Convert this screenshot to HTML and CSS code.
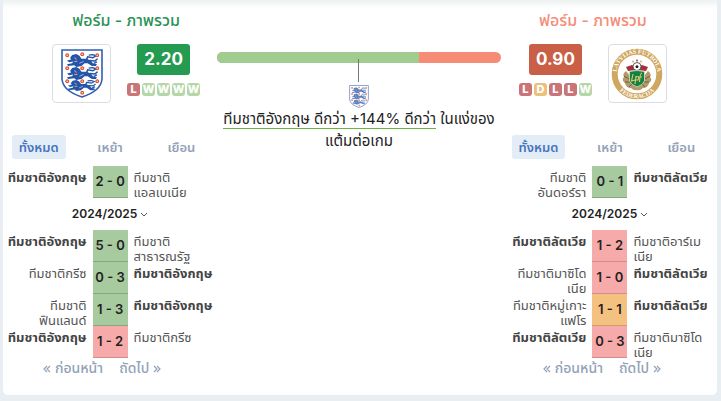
FILE: index.html
```html
<!DOCTYPE html>
<html lang="th">
<head>
    <meta charset="UTF-8">
    <meta name="viewport" content="width=device-width, initial-scale=1.0">
    <title>ฟอร์ม - ภาพรวม</title>
    <link rel="stylesheet" href="styles.css">
</head>
<body>
    <svg class="sprite" aria-hidden="true">
        <symbol id="lion" viewBox="0 0 30 14" preserveAspectRatio="none">
            <path d="M3 4 L5 1 L9 0 L12 2 L14 5 L19 5 L23 7 L25 10 L29 11 L28 13 L24 13 L20 10 L17 10 L14 13 L9 14 L7 12 L1 13 L0 11 L5 10 L6 8 L2 9 L0 7 L4 6 Z" fill="#2455a8"/>
            <path d="M19 6 L20 3 L25 4 L28 2 L25 0.700 L21 1.200 M22 7 L27 7.500 L29.500 5 M26 10 L29 8.500" fill="none" stroke="#2455a8" stroke-width="1.5"/>
            <path d="M7 4 L9 5 M7 8 L10 8 M12 10 L16 8" stroke="#d8e3f5" stroke-width="0.7"/>
            <circle cx="9" cy="6" r="1" fill="#e0503c"/>
        </symbol>
        <symbol id="rose" viewBox="0 0 6 6">
            <circle cx="3" cy="3" r="2.6" fill="#e0503c"/>
            <circle cx="3" cy="3" r="1.1" fill="#fbe3a0"/>
        </symbol>
        <symbol id="england" viewBox="0 0 42 49">
            <path d="M1 1 H41 V30 Q40 42 21 48 Q2 42 1 30 Z" fill="#fff" stroke="#2e5fb3" stroke-width="1.6"/>
            <use href="#lion" x="6" y="5" width="31" height="13"/>
            <use href="#lion" x="6" y="18" width="31" height="13"/>
            <use href="#lion" x="7" y="31" width="28" height="11"/>
            <use href="#rose" x="4" y="4" width="4.5" height="4.5"/>
            <use href="#rose" x="19" y="3" width="4.5" height="4.5"/>
            <use href="#rose" x="34" y="4" width="4.5" height="4.5"/>
            <use href="#rose" x="4" y="17" width="4.5" height="4.5"/>
            <use href="#rose" x="19" y="17" width="4.5" height="4.5"/>
            <use href="#rose" x="34" y="17" width="4.5" height="4.5"/>
            <use href="#rose" x="4" y="30" width="4.5" height="4.5"/>
            <use href="#rose" x="19" y="30" width="4.5" height="4.5"/>
            <use href="#rose" x="34" y="30" width="4.5" height="4.5"/>
            <use href="#rose" x="19" y="41.5" width="4.5" height="4.5"/>
        </symbol>
        <symbol id="latvia" viewBox="0 0 52 52">
            <defs>
                <path id="arc-top" d="M5.5 27 V26 A20.5 20.5 0 0 1 46.5 26 V27"/>
                <path id="arc-bottom" d="M1.800 26 A24.200 24.200 0 0 0 50.200 26"/>
            </defs>
            <circle cx="26" cy="26" r="22.300" fill="#fff" stroke="#d0a75f" stroke-width="6"/>
            <text class="ring-text"><textPath href="#arc-top" startOffset="50%" text-anchor="middle">LATVIJAS FUTBOLA</textPath></text>
            <text class="ring-text"><textPath href="#arc-bottom" startOffset="50%" text-anchor="middle">FEDERACIJA</textPath></text>
            <path d="M15 23 Q11 26 13 29 Q10 32 14 35 Q15 40 20 40 Q23 43 26 42 Q29 43 32 40 Q37 40 38 35 Q42 32 39 29 Q41 26 37 23 L33 28 H19 Z" fill="#b39a68"/>
            <path d="M13 28 L18 31 M14 34 L19 34 M18 39 L21 36 M39 28 L34 31 M38 34 L33 34 M34 39 L31 36" stroke="#6f6142" stroke-width="1"/>
            <path d="M15 19 L21 17 L26 20 L31 17 L37 19 L35 23 L26 22 L17 23 Z" fill="#a52f3c"/>
            <circle cx="26" cy="18.500" r="4" fill="#fff" stroke="#333" stroke-width="0.8"/>
            <path d="M26 17 L27.600 18.200 L27 20 H25 L24.400 18.200 Z" fill="#222"/>
            <circle cx="22" cy="13.500" r="0.9" fill="#d0a75f"/>
            <circle cx="26" cy="12.500" r="0.9" fill="#a52f3c"/>
            <circle cx="30" cy="13.500" r="0.9" fill="#d0a75f"/>
            <path d="M18.500 23.500 Q26 21.500 33.500 23.500 V33 Q32 37 26 39 Q20 37 18.500 33 Z" fill="#118246" stroke="#e8ddc0" stroke-width="0.8"/>
            <path d="M22 26 L20.500 33 L24 32 M25 28 L24 36 M25 29 Q29 27 27 32 L25 32 M31 25 Q29 25 28.500 34 M27 29 H31" fill="none" stroke="#e2c66f" stroke-width="1.1"/>
        </symbol>
        <symbol id="chevron" viewBox="0 0 8 6">
            <path d="M1 1 L4 4 L7 1" fill="none" stroke="#555" stroke-width="1"/>
        </symbol>
        <symbol id="angles-left" viewBox="0 0 8 8">
            <path d="M4 1 L1 4 L4 7 M7 1 L4 4 L7 7" fill="none" stroke="currentColor" stroke-width="1.2"/>
        </symbol>
        <symbol id="angles-right" viewBox="0 0 8 8">
            <path d="M1 1 L4 4 L1 7 M4 1 L7 4 L4 7" fill="none" stroke="currentColor" stroke-width="1.2"/>
        </symbol>
    </svg>

    <main class="card">
        <section class="team team-home">
            <div class="overview">
                <h2 class="title">ฟอร์ม - ภาพรวม</h2>
                <div class="summary">
                    <div class="logo"><svg class="crest" role="img" aria-label="ทีมชาติอังกฤษ"><use href="#england"/></svg></div>
                    <div class="form">
                        <strong class="ppg">2.20</strong>
                        <div class="results"><span class="loss">L</span><span class="win">W</span><span class="win">W</span><span class="win">W</span><span class="win">W</span></div>
                    </div>
                </div>
            </div>
            <nav class="tabs">
                <button class="tab active">ทั้งหมด</button>
                <button class="tab">เหย้า</button>
                <button class="tab">เยือน</button>
            </nav>
            <div class="match">
                <a href="#" class="name own">ทีมชาติอังกฤษ</a>
                <span class="score win">2 - 0</span>
                <a href="#" class="name">ทีมชาติ<br>แอลเบเนีย</a>
            </div>
            <button class="season">2024/2025 <svg class="chevron"><use href="#chevron"/></svg></button>
            <div class="match">
                <a href="#" class="name own">ทีมชาติอังกฤษ</a>
                <span class="score win">5 - 0</span>
                <a href="#" class="name">ทีมชาติ<br>สาธารณรัฐ</a>
            </div>
            <div class="match">
                <a href="#" class="name">ทีมชาติกรีซ</a>
                <span class="score win">0 - 3</span>
                <a href="#" class="name own">ทีมชาติอังกฤษ</a>
            </div>
            <div class="match">
                <a href="#" class="name">ทีมชาติ<br>ฟินแลนด์</a>
                <span class="score win">1 - 3</span>
                <a href="#" class="name own">ทีมชาติอังกฤษ</a>
            </div>
            <div class="match">
                <a href="#" class="name own">ทีมชาติอังกฤษ</a>
                <span class="score loss">1 - 2</span>
                <a href="#" class="name">ทีมชาติกรีซ</a>
            </div>
            <div class="pager">
                <button><svg class="angles"><use href="#angles-left"/></svg> ก่อนหน้า</button>
                <button>ถัดไป <svg class="angles"><use href="#angles-right"/></svg></button>
            </div>
        </section>

        <section class="compare">
            <div class="bar"><div class="bar-home" style="width: 71%"></div></div>
            <div class="pointer"></div>
            <svg class="crest-small" aria-hidden="true"><use href="#england"/></svg>
            <p class="verdict"><span class="underline">ทีมชาติอังกฤษ ดีกว่า +144% ดีกว่า</span> ในแง่ของ<br>แต้มต่อเกม</p>
        </section>

        <section class="team team-away">
            <div class="overview">
                <h2 class="title">ฟอร์ม - ภาพรวม</h2>
                <div class="summary">
                    <div class="form">
                        <strong class="ppg">0.90</strong>
                        <div class="results"><span class="loss">L</span><span class="draw">D</span><span class="loss">L</span><span class="loss">L</span><span class="win">W</span></div>
                    </div>
                    <div class="logo"><svg class="emblem" role="img" aria-label="ทีมชาติลัตเวีย"><use href="#latvia"/></svg></div>
                </div>
            </div>
            <nav class="tabs">
                <button class="tab active">ทั้งหมด</button>
                <button class="tab">เหย้า</button>
                <button class="tab">เยือน</button>
            </nav>
            <div class="match">
                <a href="#" class="name">ทีมชาติ<br>อันดอร์รา</a>
                <span class="score win">0 - 1</span>
                <a href="#" class="name own">ทีมชาติลัตเวีย</a>
            </div>
            <button class="season">2024/2025 <svg class="chevron"><use href="#chevron"/></svg></button>
            <div class="match">
                <a href="#" class="name own">ทีมชาติลัตเวีย</a>
                <span class="score loss">1 - 2</span>
                <a href="#" class="name">ทีมชาติอาร์เม<br>เนีย</a>
            </div>
            <div class="match">
                <a href="#" class="name">ทีมชาติมาซิโด<br>เนีย</a>
                <span class="score loss">1 - 0</span>
                <a href="#" class="name own">ทีมชาติลัตเวีย</a>
            </div>
            <div class="match">
                <a href="#" class="name">ทีมชาติหมู่เกาะ<br>แฟโร</a>
                <span class="score draw">1 - 1</span>
                <a href="#" class="name own">ทีมชาติลัตเวีย</a>
            </div>
            <div class="match">
                <a href="#" class="name own">ทีมชาติลัตเวีย</a>
                <span class="score loss">0 - 3</span>
                <a href="#" class="name">ทีมชาติมาซิโด<br>เนีย</a>
            </div>
            <div class="pager">
                <button><svg class="angles"><use href="#angles-left"/></svg> ก่อนหน้า</button>
                <button>ถัดไป <svg class="angles"><use href="#angles-right"/></svg></button>
            </div>
        </section>
    </main>
</body>
</html>
```

FILE: styles.css
```css
* {
    box-sizing: border-box;
}
body {
    margin: 0;
    padding: 0 4px 4px 3px;
    background-color: #e9eef2;
    font-family: Inter, "Noto Sans Thai", sans-serif;
    font-size: 13px;
    color: #222;
}
button {
    border: 0;
    padding: 0;
    background: none;
    font: inherit;
    color: inherit;
    cursor: pointer;
}
.sprite {
    display: block;
    width: 0;
    height: 0;
}
.card {
    display: grid;
    grid-template-columns: 3fr 4fr 3fr;
    padding-bottom: 18px;
    background: linear-gradient(#eef1f1, #fff 8px);
    border-radius: 0 0 5px 5px;
}
.team {
    min-width: 0;
}

/* Resumen de cada equipo */
.overview {
    height: 135px;
    padding-top: 10px;
    text-align: center;
}
.team-home .overview {
    padding-left: 32px;
}
.team-away .overview {
    padding-right: 34px;
}
.title {
    margin: 0 0 14px;
    font-size: 16px;
    line-height: 20px;
    font-weight: 500;
    color: #2b9255;
}
.team-away .title {
    color: #f68b76;
}
.summary {
    display: flex;
    justify-content: center;
    gap: 16px;
}
.logo {
    display: flex;
    align-items: center;
    justify-content: center;
    width: 59px;
    height: 59px;
    border: 1px solid #dcdce6;
    border-radius: 4px;
    background-color: #fff;
}
.crest {
    width: 42px;
    height: 49px;
}
.emblem {
    width: 52px;
    height: 52px;
}
.ring-text {
    font-family: "Liberation Serif", serif;
    font-size: 6px;
    font-weight: bold;
    fill: #fff;
}
.form {
    display: flex;
    flex-direction: column;
    align-items: center;
    gap: 8px;
}
.ppg {
    width: 53px;
    line-height: 31px;
    border-radius: 3px;
    background-color: #259b52;
    font-size: 17px;
    color: #fff;
}
.team-away .ppg {
    background-color: #c85f46;
}
.results {
    display: flex;
    gap: 2px;
}
.results span {
    width: 13px;
    line-height: 13px;
    border-radius: 3px;
    font-size: 11px;
    font-weight: 800;
    color: #fff;
}
.results .win {
    background-color: #b5d7a8;
}
.results .draw {
    background-color: #eac07b;
}
.results .loss {
    background-color: #cb7478;
}

/* Pestañas y partidos */
.tabs {
    display: grid;
    grid-template-columns: repeat(3, 1fr);
    justify-items: center;
    margin-bottom: 7px;
}
.tab {
    padding: 0 7px;
    line-height: 24px;
    border-radius: 3px;
    font-weight: 600;
    color: #93a2b8;
}
.tab.active {
    background-color: #e3edf7;
    color: #4775bd;
}
.match {
    display: grid;
    grid-template-columns: 1fr 35px 1fr;
    grid-template-rows: 32px;
    column-gap: 6px;
}
.name {
    padding-top: 4px;
    line-height: 15px;
    color: #555;
    text-decoration: none;
    white-space: nowrap;
}
.name:first-child {
    justify-self: end;
    text-align: right;
}
.name.own {
    font-weight: bold;
    color: #444;
}
.score {
    border-bottom: 1px solid #8aa783;
    line-height: 31px;
    text-align: center;
    font-size: 13px;
    font-weight: 600;
}
.score.win {
    background-color: #a7cb9f;
}
.score.draw {
    background-color: #f5c181;
    border-color: #cda06a;
}
.score.loss {
    background-color: #f6aaa9;
    border-color: #ce8e8d;
}
.season {
    display: block;
    width: 100%;
    font-size: 12px;
    line-height: 32px;
    font-weight: 600;
}
.chevron {
    width: 8px;
    height: 6px;
}
.pager {
    display: flex;
    justify-content: center;
    gap: 16px;
    padding-right: 16px;
    font-size: 14px;
    line-height: 19px;
    font-weight: 500;
    color: #93a2b8;
}
.angles {
    width: 8px;
    height: 8px;
}

/* Comparación central */
.compare {
    display: flex;
    flex-direction: column;
    align-items: center;
    padding: 52px 2px 0 0;
}
.bar {
    width: 100%;
    height: 11px;
    border-radius: 6px;
    overflow: hidden;
    background-color: #f68b76;
}
.bar-home {
    height: 100%;
    background-color: #a1cc8f;
}
.pointer {
    width: 1px;
    height: 23px;
    margin-top: -4px;
    background-color: #777;
}
.crest-small {
    width: 20px;
    height: 23px;
    margin: 3px 0 0;
    opacity: 0.75;
}
.verdict {
    margin: 0;
    font-size: 15px;
    line-height: 22px;
    text-align: center;
    white-space: nowrap;
}
.underline {
    border-bottom: 1px solid #6cb33f;
}
```
